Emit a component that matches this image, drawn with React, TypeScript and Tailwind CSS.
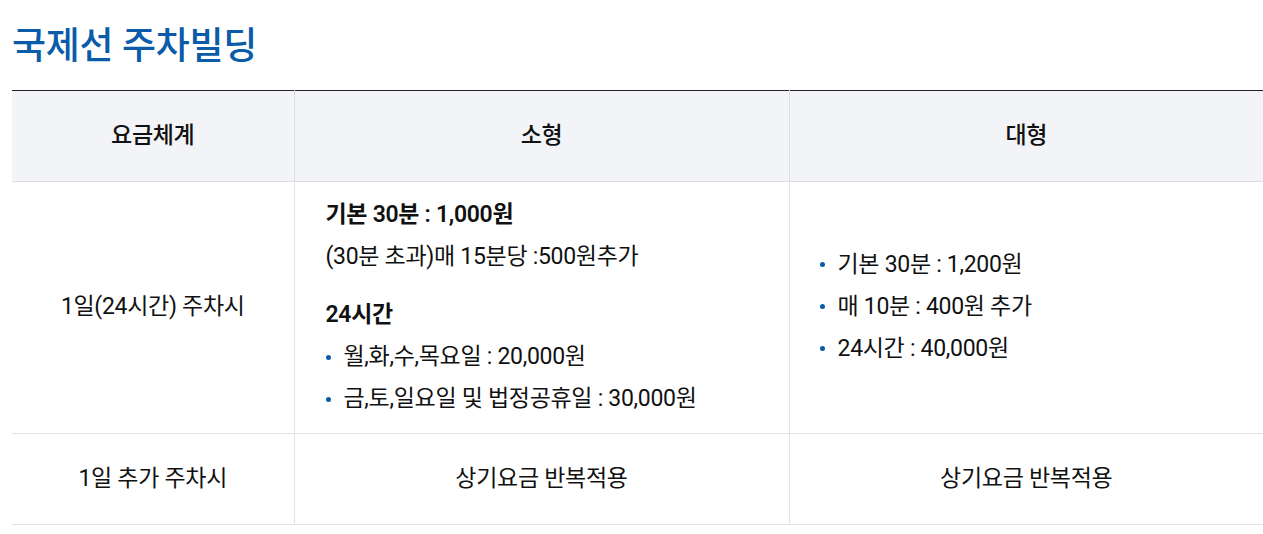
import React from "react";

const font = { fontFamily: "Roboto, 'Noto Sans CJK KR', sans-serif" };

function Bullet({ children }: { children: React.ReactNode }) {
  return (
    <li className="flex items-center">
      <span className="mr-[13px] inline-block h-[5px] w-[5px] shrink-0 rounded-full bg-[#0a5ca8]" />
      <span>{children}</span>
    </li>
  );
}

export default function App() {
  return (
    <div className="min-h-[534px] bg-white pl-3 text-[#111] tracking-[-0.3px]" style={font}>
      <h2 className="pt-[22px] pb-[19px] text-[37px] font-medium leading-[49px] text-[#0a5ca8]">
        국제선 주차빌딩
      </h2>

      <table className="w-full border-collapse border-t border-t-[#222] text-[23px]">
        <thead>
          <tr className="h-[91px] bg-[#f3f4f8]">
            <th className="w-[282px] border-b border-[#dddde0] font-medium">요금체계</th>
            <th className="w-[495px] border-b border-l border-[#dddde0] font-medium">소형</th>
            <th className="border-b border-l border-[#dddde0] font-medium">대형</th>
          </tr>
        </thead>
        <tbody>
          <tr className="h-[252px]">
            <td className="border-b border-[#e2e2e5] text-center">1일(24시간) 주차시</td>
            <td className="border-b border-l border-[#e2e2e5] pl-[31px] align-top">
              <div className="pt-[12px] leading-[42px]">
                <p className="font-semibold">기본 30분 : 1,000원</p>
                <p>(30분 초과)매 15분당 :500원추가</p>
                <p className="mt-4 font-semibold">24시간</p>
                <ul>
                  <Bullet>월,화,수,목요일 : 20,000원</Bullet>
                  <Bullet>금,토,일요일 및 법정공휴일 : 30,000원</Bullet>
                </ul>
              </div>
            </td>
            <td className="border-b border-l border-[#e2e2e5] pl-[30px]">
              <ul className="pb-[2px] leading-[42px]">
                <Bullet>기본 30분 : 1,200원</Bullet>
                <Bullet>매 10분 : 400원 추가</Bullet>
                <Bullet>24시간 : 40,000원</Bullet>
              </ul>
            </td>
          </tr>
          <tr className="h-[91px]">
            <td className="border-b border-[#e2e2e5] text-center">1일 추가 주차시</td>
            <td className="border-b border-l border-[#e2e2e5] text-center">상기요금 반복적용</td>
            <td className="border-b border-l border-[#e2e2e5] text-center">상기요금 반복적용</td>
          </tr>
        </tbody>
      </table>
    </div>
  );
}
